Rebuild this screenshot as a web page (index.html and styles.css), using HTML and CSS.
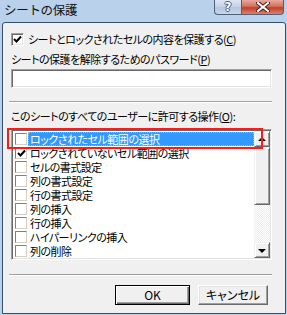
FILE: index.html
```html
<!DOCTYPE html>
<html lang="ja">
<head>
<meta charset="utf-8">
<link rel="stylesheet" href="styles.css">
</head>
<body>
<div class="window">
  <div class="titlebar">
    <span class="title">シートの保護</span>
    <div class="caption-btns">
      <div class="cbtn help"><span class="q">?</span></div>
      <div class="cbtn close">
        <svg width="14" height="10" viewBox="0 0 14 10"><path d="M2 1 L12 9 M12 1 L2 9" stroke="#4a2020" stroke-width="4" stroke-linecap="square"/><path d="M2 1 L12 9 M12 1 L2 9" stroke="#ffffff" stroke-width="2" stroke-linecap="square"/></svg>
      </div>
    </div>
  </div>
  <div class="client">
    <div class="chkrow">
      <span class="chk"><svg width="9" height="9" viewBox="0 0 9 9"><path d="M1 4 L3.5 6.5 L8 1.5" stroke="#000" stroke-width="2" fill="none"/></svg></span>
      <span class="nowrap">シートとロックされたセルの内容を保護する(<u>C</u>)</span>
    </div>
    <div class="lbl lbl-pw">シートの保護を解除するためのパスワード(<u>P</u>)</div>
    <div class="input"></div>
    <div class="sep sep-top"></div>
    <div class="lbl lbl-ops">このシートのすべてのユーザーに許可する操作(<u>O</u>):</div>
    <div class="listwrap">
      <div class="list">
        <div class="items">
          <div class="row"><span class="lchk"></span><span class="txt selected">ロックされたセル範囲の選択</span></div>
          <div class="row"><span class="lchk"><svg width="9" height="9" viewBox="0 0 9 9"><path d="M1 4 L3.5 6.5 L8 1.5" stroke="#000" stroke-width="2" fill="none"/></svg></span><span class="txt">ロックされていないセル範囲の選択</span></div>
          <div class="row"><span class="lchk"></span><span class="txt">セルの書式設定</span></div>
          <div class="row"><span class="lchk"></span><span class="txt">列の書式設定</span></div>
          <div class="row"><span class="lchk"></span><span class="txt">行の書式設定</span></div>
          <div class="row"><span class="lchk"></span><span class="txt">列の挿入</span></div>
          <div class="row"><span class="lchk"></span><span class="txt">行の挿入</span></div>
          <div class="row"><span class="lchk"></span><span class="txt">ハイパーリンクの挿入</span></div>
          <div class="row"><span class="lchk"></span><span class="txt">列の削除</span></div>
        </div>
        <div class="sbar">
          <div class="sbtn"><span class="arrow up"></span></div>
          <div class="thumb"></div>
          <div class="track"></div>
          <div class="sbtn"><span class="arrow down"></span></div>
        </div>
      </div>
      <div class="redbox"></div>
    </div>
    <div class="sep sep-bottom"></div>
    <div class="btnrow">
      <div class="btn default">OK</div>
      <div class="btn cancel">キャンセル</div>
    </div>
  </div>
</div>
</body>
</html>
```

FILE: styles.css
```css
* { box-sizing: border-box; }
html, body { margin: 0; padding: 0; }
body {
  width: 287px;
  height: 315px;
  overflow: hidden;
  font-family: "Noto Sans CJK JP", "Noto Sans", sans-serif;
  font-size: 11px;
  letter-spacing: -0.5px;
  font-feature-settings: "palt";
  color: #000;
}
.nowrap { white-space: nowrap; }
.window {
  width: 287px;
  height: 315px;
  background: #b9d1ea;
  padding: 0 1px 1px 2px;
  display: flex;
  flex-direction: column;
}
.titlebar {
  height: 22px;
  display: flex;
  justify-content: space-between;
  align-items: flex-start;
  margin-left: -2px;
  margin-right: 2px;
  flex: none;
}
.title {
  padding: 2px 0 0 4px;
  line-height: 16px;
  font-size: 12.5px;
  letter-spacing: -0.3px;
  font-feature-settings: normal;
  color: #111;
}
.caption-btns {
  display: flex;
  height: 15px;
}
.cbtn {
  height: 15px;
  border: 1px solid #4e5f7c;
  border-top: none;
  display: flex;
  align-items: center;
  justify-content: center;
}
.help {
  width: 27px;
  border-radius: 0 0 0 4px;
  border-right: none;
  background: linear-gradient(#dce6f4, #c3d2e6 50%, #b4c6de 51%, #c7d6ea);
}
.q {
  font-family: "DejaVu Sans", sans-serif;
  font-weight: bold;
  font-size: 12px;
  line-height: 12px;
  letter-spacing: 0;
  color: #fff;
  text-shadow: 1px 0 #4a5a78, -1px 0 #4a5a78, 0 1px #4a5a78, 0 -1px #4a5a78;
}
.close {
  width: 43px;
  border-radius: 0 0 4px 0;
  background: linear-gradient(#e8a99e, #d4705f 45%, #c23f2c 55%, #d9826b);
}
.client {
  flex: 1;
  background: #f0f0f0;
  border: 1px solid #3a4d6d;
  border-radius: 3px 3px 0 0;
  padding: 0 13px 0 8px;
  display: flex;
  flex-direction: column;
}
.chkrow {
  margin-top: 10px;
  display: flex;
  align-items: center;
  height: 13px;
  line-height: 13px;
}
.chk {
  width: 13px;
  height: 13px;
  background: #fff;
  border: 1px solid;
  border-color: #a0a0a0 #fff #fff #a0a0a0;
  box-shadow: inset 1px 1px 0 #696969, inset -1px -1px 0 #e3e3e3;
  display: flex;
  align-items: center;
  justify-content: center;
  margin-right: 4px;
  flex: none;
}
.lbl {
  line-height: 14px;
  height: 14px;
  white-space: nowrap;
}
.lbl-pw { margin-top: 6px; }
.input {
  margin-top: 3px;
  height: 19px;
  background: #fff;
  border: 1px solid;
  border-color: #a0a0a0 #fff #fff #a0a0a0;
  box-shadow: inset 1px 1px 0 #696969, inset -1px -1px 0 #e3e3e3;
}
.sep {
  height: 2px;
  border-top: 1px solid #a0a0a0;
  border-bottom: 1px solid #fff;
  margin-left: -2px;
}
.sep-top { margin-top: 13px; }
.lbl-ops { margin-top: 6px; }
.listwrap {
  position: relative;
  margin-top: 6px;
}
.list {
  height: 131px;
  background: #fff;
  border: 1px solid;
  border-color: #a0a0a0 #fff #fff #a0a0a0;
  box-shadow: inset 1px 1px 0 #696969, inset -1px -1px 0 #e3e3e3;
  padding: 1px;
  display: flex;
}
.items {
  flex: 1;
  padding-top: 1px;
}
.row {
  height: 14px;
  display: flex;
  align-items: center;
}
.lchk {
  width: 12px;
  height: 12px;
  margin-left: 2px;
  margin-right: 1px;
  background: #fff;
  border: 1px solid;
  border-color: #808080 #d4d0c8 #d4d0c8 #808080;
  display: flex;
  align-items: center;
  justify-content: center;
  flex: none;
}
.txt {
  padding-left: 2px;
  height: 14px;
  line-height: 14px;
  white-space: nowrap;
}
.txt.selected {
  flex: 1;
  background: #3399ff;
  color: #fff;
  outline: 1px dotted #f0a050;
  outline-offset: -1px;
}
.sbar {
  width: 16px;
  display: flex;
  flex-direction: column;
}
.sbtn {
  height: 16px;
  background: #f0f0f0;
  border: 1px solid;
  border-color: #f0f0f0 #696969 #696969 #f0f0f0;
  box-shadow: inset 1px 1px 0 #fff, inset -1px -1px 0 #a0a0a0;
  display: flex;
  align-items: center;
  justify-content: center;
  flex: none;
}
.arrow {
  width: 0;
  height: 0;
  border-left: 4px solid transparent;
  border-right: 4px solid transparent;
}
.arrow.up { border-bottom: 4px solid #000; margin-top: -1px; }
.arrow.down { border-top: 4px solid #000; margin-top: 1px; }
.thumb {
  height: 58px;
  background: #f0f0f0;
  border: 1px solid;
  border-color: #f0f0f0 #696969 #696969 #f0f0f0;
  box-shadow: inset 1px 1px 0 #fff, inset -1px -1px 0 #a0a0a0;
  flex: none;
}
.track {
  flex: 1;
  background: repeating-conic-gradient(#ffffff 0 25%, #ececec 0 50%) 0 0 / 2px 2px;
}
.redbox {
  position: absolute;
  left: -4px;
  top: -1px;
  width: 256px;
  height: 21px;
  border: 2px solid #ff1a1a;
}
.sep-bottom { margin-top: 14px; }
.btnrow {
  margin-top: 9px;
  display: flex;
  justify-content: flex-end;
  gap: 8px;
  margin-right: 4px;
}
.btn {
  height: 20px;
  line-height: 18px;
  text-align: center;
  font-size: 12px;
  letter-spacing: 0;
  background: #f0f0f0;
  border: 1px solid;
  border-color: #fff #696969 #696969 #fff;
  box-shadow: inset -1px -1px 0 #a0a0a0, inset 1px 1px 0 #e3e3e3;
}
.btn.default {
  width: 75px;
  border-color: #000;
  box-shadow: inset 1px 1px 0 #fff, inset -1px -1px 0 #696969, inset -2px -2px 0 #a0a0a0;
}
.btn.cancel {
  width: 70px;
}
```
